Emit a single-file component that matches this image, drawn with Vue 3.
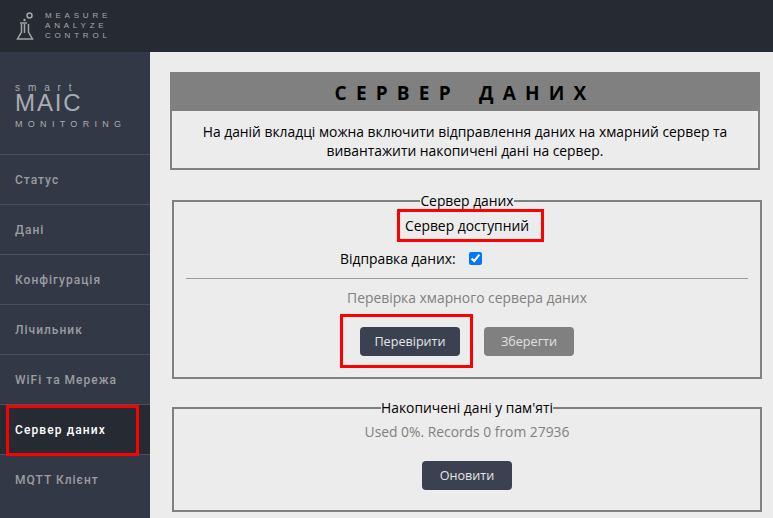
<script setup>
const navItems = [
  { label: 'Статус' },
  { label: 'Дані' },
  { label: 'Конфігурація' },
  { label: 'Лічильник' },
  { label: 'WiFi та Мережа' },
  { label: 'Сервер даних', active: true },
  { label: 'MQTT Клієнт' },
]
</script>

<template>
  <div class="app">
    <header class="topbar">
      <svg class="flask" width="20" height="28" viewBox="0 0 20 28" fill="none" stroke="#a3a5a7" stroke-width="1.5">
        <circle cx="13.5" cy="3.5" r="2.5" />
        <circle cx="8.5" cy="8" r="1.2" fill="#a3a5a7" stroke="none" />
        <path d="M4 11h7M5.5 12v8L1.5 27h15l-4-7v-8M8.5 12v9" />
      </svg>
      <div class="motto"><div>MEASURE</div><div>ANALYZE</div><div>CONTROL</div></div>
    </header>
    <div class="body-row">
      <aside class="sidebar">
        <div class="brand">
          <div class="smart">smart</div>
          <div class="maic">MAIC</div>
          <div class="monitoring">MONITORING</div>
        </div>
        <nav class="nav">
          <div v-for="item in navItems" :key="item.label" class="nav-item" :class="{ active: item.active }">
            <span>{{ item.label }}</span>
          </div>
        </nav>
      </aside>
      <main class="main">
        <section class="intro">
          <h1>СЕРВЕР ДАНИХ</h1>
          <p>На даній вкладці можна включити відправлення даних на хмарний сервер та вивантажити накопичені дані на сервер.</p>
        </section>
        <fieldset class="panel first">
          <legend>Сервер даних</legend>
          <div class="status-row"><span class="status">Сервер доступний</span></div>
          <label class="check-row">
            <span>Відправка даних:</span>
            <input type="checkbox" checked />
          </label>
          <hr />
          <div class="muted check-title">Перевірка хмарного сервера даних</div>
          <div class="buttons">
            <div class="mark"><button class="btn">Перевірити</button></div>
            <button class="btn grey">Зберегти</button>
          </div>
        </fieldset>
        <fieldset class="panel second">
          <legend>Накопичені дані у пам'яті</legend>
          <div class="muted used">Used 0%. Records 0 from 27936</div>
          <div class="refresh"><button class="btn">Оновити</button></div>
        </fieldset>
      </main>
    </div>
  </div>
</template>

<style>
html, body { margin: 0; overflow: hidden; }
</style>

<style scoped>
.app { width: 773px; height: 518px; overflow: hidden; display: flex; flex-direction: column; background: #ececec; font-family: "Open Sans", sans-serif; color: #000; }
.topbar { height: 52px; flex: none; box-sizing: border-box; background: #262b33; display: flex; align-items: center; padding-left: 16px; gap: 9px; }
.flask { flex: none; margin-top: -1px; }
.motto { font: 8px/10px "Liberation Sans", sans-serif; letter-spacing: 3.8px; color: #a6a8aa; margin-top: -1px; }
.body-row { display: flex; flex: 1; min-height: 0; }
.sidebar { width: 150px; flex: none; background: #323845; display: flex; flex-direction: column; }
.brand { height: 102px; box-sizing: border-box; padding: 32px 0 0 15px; color: #a9acb1; font-family: "Liberation Sans", sans-serif; }
.smart { font-size: 10px; line-height: 8px; letter-spacing: 7.9px; }
.maic { font-size: 24px; line-height: 21px; letter-spacing: 1.9px; }
.monitoring { font-size: 9px; line-height: 10px; margin-top: 6px; letter-spacing: 5.3px; }
.nav-item { height: 50px; box-sizing: border-box; border-top: 1px solid #4c4f55; display: flex; align-items: center; padding-left: 15px; font: 500 12px Roboto, sans-serif; letter-spacing: 1px; color: #9a9da3; position: relative; }
.nav-item.active { background: #262b33; color: #fff; font-weight: 500; letter-spacing: 1.1px; }
.nav-item.active::after { content: ""; position: absolute; left: 6px; top: 0; width: 133px; height: 51px; box-sizing: border-box; border: 3px solid #f00; z-index: 1; }
.main { flex: 1; min-width: 0; padding: 20px 13px 0 20px; }
.intro { border: 2px solid #808080; text-align: center; height: 98px; box-sizing: border-box; }
.intro h1 { margin: 0; background: #808080; height: 37px; font-size: 19px; font-weight: 700; line-height: 38px; letter-spacing: 9.2px; white-space: pre; word-spacing: 5px; }
.intro p { margin: 0; padding: 11px 20px 0; font-size: 13.85px; line-height: 19px; }
.panel { margin: 0 -2px 0 2px; padding: 0 12px; border: 2px solid #808080; min-width: 0; text-align: center; box-sizing: border-box; font-size: 13.85px; }
.panel legend { padding: 0; font-size: 13.85px; line-height: 19px; }
.first { margin-top: 21px; height: 188px; }
.second { margin-top: 19px; height: 114px; }
.status-row { height: 33px; margin-top: -1px; display: flex; justify-content: center; }
.status { width: 147px; box-sizing: border-box; border: 3px solid #f00; line-height: 28px; margin-left: 6px; padding-right: 6px; }
.check-row { display: flex; align-items: center; height: 24px; margin-top: 4px; padding-left: 154px; }
.check-row input { margin: 0 0 0 13px; width: 13px; height: 13px; accent-color: #0075ff; }
hr { border: 0; border-top: 1px solid #999; margin: 8px 0 0; }
.muted { color: #808080; }
.check-title { margin-top: 9px; line-height: 20px; }
.buttons { display: flex; justify-content: center; align-items: flex-start; gap: 11px; margin-top: 6px; padding-right: 20px; }
.mark { width: 133px; height: 54px; box-sizing: border-box; border: 3px solid #f00; padding: 10px 0 0 17px; }
.btn { width: 100px; height: 29px; border: 0; border-radius: 4px; background: #3b4150; color: #e4e5e7; font: 12.6px "Open Sans", sans-serif; padding: 0; display: block; }
.grey { width: 90px; margin-top: 13px; background: #808080; color: #e0e0e0; }
.used { line-height: 20px; margin-top: 5px; }
.refresh { margin-top: 19px; display: flex; justify-content: center; }
.refresh .btn { width: 90px; }
</style>
